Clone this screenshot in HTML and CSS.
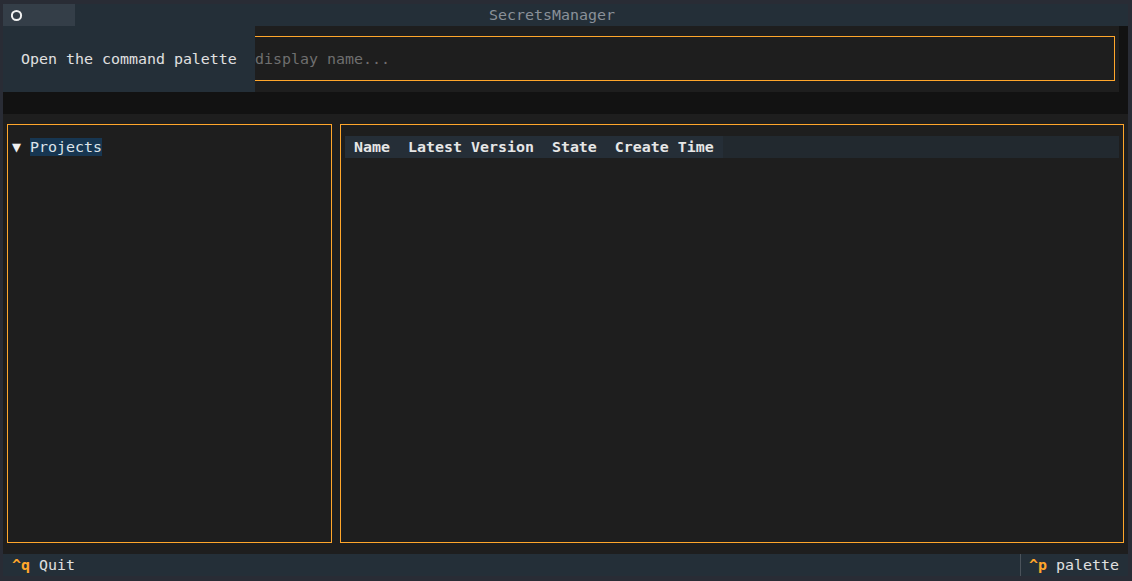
FILE: index.html
```html
<!DOCTYPE html>
<html lang="en">
<head>
<meta charset="utf-8">
<title>SecretsManager</title>
<link rel="stylesheet" href="styles.css">
</head>
<body>
<div class="app">
  <header class="header">
    <div class="header-icon"><svg class="icon" width="14" height="22" viewBox="0 0 14 22"><circle cx="5.5" cy="11.5" r="4.6" fill="none" stroke="#f2f2f2" stroke-width="2"/></svg></div>
    <div class="header-title">SecretsManager</div>
    <div class="header-space"></div>
  </header>

  <section class="top">
    <div class="input-wrap">
      <div class="input-frame">
        <span class="placeholder">display name...</span>
      </div>
    </div>
    <div class="top-gutter"></div>
  </section>

  <main class="main">
    <div class="panel panel-left">
      <div class="frame">
        <div class="tree-row"><span class="tree-toggle">▼</span> <span class="tree-label">Projects</span></div>
      </div>
    </div>
    <div class="panel panel-right">
      <div class="frame">
        <div class="table-header">
          <span class="th">Name</span><span class="th">Latest Version</span><span class="th">State</span><span class="th">Create Time</span>
        </div>
      </div>
    </div>
  </main>

  <footer class="footer">
    <div class="footer-key"><b class="key">^q</b> Quit</div>
    <div class="footer-spacer"></div>
    <div class="footer-key footer-palette"><b class="key">^p</b> palette</div>
  </footer>

  <div class="tooltip">Open the command palette</div>
</div>
</body>
</html>
```
FILE: styles.css
```css
html, body {
  margin: 0;
  padding: 0;
}
body {
  background: #292c35;
  padding: 4px 3px 5px 3px;
  width: 1132px;
  height: 581px;
  box-sizing: border-box;
  overflow: hidden;
  font-family: "DejaVu Sans Mono", "Liberation Mono", monospace;
  font-size: 14.95px;
  line-height: 22px;
  color: #e0e0e0;
}
.app {
  position: relative;
  width: 1125px;
  height: 572px;
  display: flex;
  flex-direction: column;
  background: #121212;
}

/* header */
.header {
  height: 22px;
  display: flex;
  background: #242f38;
  flex: none;
}
.header-icon {
  width: 72px;
  padding-left: 8px;
  box-sizing: border-box;
  background: #343e48;
  display: flex;
}
.icon {
  display: block;
}
.header-title {
  flex: 1;
  padding-left: 414px;
  color: #8a9199;
  white-space: nowrap;
}
.header-space {
  width: 90px;
}

/* top input area */
.top {
  height: 88px;
  display: flex;
  flex: none;
  background: #121212;
}
.input-wrap {
  width: 1116px;
  height: 66px;
  background: #1e1e1e;
  padding: 10px 4px 11px 4px;
  box-sizing: border-box;
}
.input-frame {
  height: 45px;
  border: 1px solid #ffa62b;
  box-sizing: border-box;
  padding: 11px 0 0 247px;
}
.placeholder {
  color: #6f6f6f;
}
.top-gutter {
  flex: 1;
}

/* main panels */
.main {
  flex: none;
  height: 440px;
  display: flex;
  background: #1e1e1e;
}
.panel {
  padding: 10px 4px 11px 4px;
  box-sizing: border-box;
  height: 440px;
}
.panel-left {
  width: 333px;
}
.panel-right {
  width: 792px;
}
.frame {
  height: 100%;
  border: 1px solid #ffa62b;
  box-sizing: border-box;
  padding: 11px 4px 0 4px;
}
.tree-row {
  white-space: pre;
  height: 22px;
}
.tree-toggle {
  color: #f0f0f0;
}
.tree-label {
  background: #173651;
  color: #dde4ea;
}
.table-header {
  display: flex;
  height: 22px;
  background: #22292f;
  font-weight: bold;
  color: #e6e6e6;
}
.th {
  padding: 0 9px;
  background: #252e37;
  white-space: pre;
}

/* footer */
.footer {
  flex: none;
  height: 22px;
  display: flex;
  background: #242f38;
}
.footer-key {
  padding: 0 9px;
  white-space: pre;
}
.footer-spacer {
  flex: 1;
}
.footer-palette {
  border-left: 1px solid #4b535b;
  padding-left: 8px;
}
.key {
  color: #ffa62b;
}

/* tooltip overlay */
.tooltip {
  position: absolute;
  left: 0;
  top: 22px;
  width: 252px;
  height: 66px;
  box-sizing: border-box;
  padding: 22px 0 0 18px;
  background: #242f38;
  color: #e0e0e0;
  white-space: nowrap;
}
```
